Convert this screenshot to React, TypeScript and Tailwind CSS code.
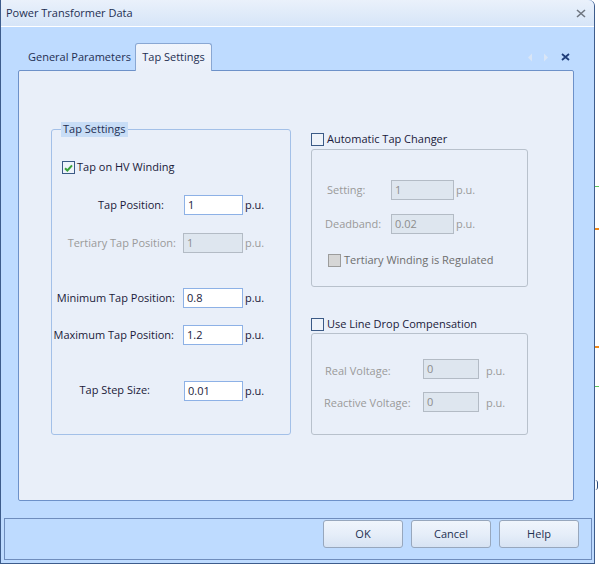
import { ReactNode } from "react";

const font = { fontFamily: '"Open Sans", "Noto Sans", sans-serif' };

function Check({ checked, disabled }: { checked?: boolean; disabled?: boolean }) {
  return (
    <span
      className={`flex items-center justify-center w-[13px] h-[13px] border ${
        disabled
          ? "border-[#9c9c9c] bg-[#d6d6d6]"
          : "border-[#3b5a86] bg-[#eef3fa]"
      }`}
    >
      {checked && (
        <svg width="9" height="8" viewBox="0 0 9 8">
          <path d="M1 4.2 L3.4 6.5 L8 1.3" stroke="#3aa23a" strokeWidth="2" fill="none" />
        </svg>
      )}
    </span>
  );
}

function Field({
  value,
  disabled,
  width,
}: {
  value: string;
  disabled?: boolean;
  width: string;
}) {
  return (
    <div
      className={`${width} h-[20px] flex items-center pl-[3px] border ${
        disabled
          ? "bg-[#dee6ef] border-[#b3bbc5] text-[#8d8d8d]"
          : "bg-white border-[#8db1e6] text-[#1a1a3a]"
      }`}
    >
      {value}
    </div>
  );
}

function Button({ children }: { children: ReactNode }) {
  return (
    <div className="w-[80px] h-[28px] flex items-center justify-center rounded-[3px] border border-[#97a7bd] bg-gradient-to-b from-[#f0f5fc] via-[#e6eef9] to-[#d7e3f3] text-[#1e3050]">
      {children}
    </div>
  );
}

export default function App() {
  return (
    <div className="flex w-[599px] h-[564px] bg-white text-[11px] text-[#1a1a3a] whitespace-nowrap" style={font}>
      <div className="flex flex-col w-[595px] h-[564px] border-x border-b border-[#3d5c8c] rounded-tr-[6px] bg-[#bedbff]">
        {/* title bar */}
        <div className="h-[27px] flex items-center justify-between pl-[5px] pr-[8px] border-b border-white bg-gradient-to-b from-[#eaf1fb] to-[#d6e5f8] rounded-tr-[6px]">
          <span className="text-[#1e2f52]">Power Transformer Data</span>
          <svg width="10" height="9" viewBox="0 0 10 9">
            <path d="M1 1 L9 8 M9 1 L1 8" stroke="#6f7680" strokeWidth="1.6" />
          </svg>
        </div>

        <div className="flex flex-col pt-[16px]">
          {/* tabs */}
          <div className="flex items-end h-[28px] -mb-px ml-[17px] w-[556px] relative z-10">
            <div className="w-[117px] h-[28px] pl-[10px] flex items-center text-[#1e2f52]">
              General Parameters
            </div>
            <div className="w-[77px] h-[28px] flex items-center justify-center text-[#1e2f52] border-x border-t border-[#89a7d3] rounded-t-[3px] bg-gradient-to-b from-[#f1f5fc] to-[#e9eff9]">
              Tap Settings
            </div>
            <div className="ml-auto flex items-center gap-[10px] pr-[4px] h-[28px]">
              <svg width="6" height="9" viewBox="0 0 6 9">
                <path d="M5 0.5 L1 4.5 L5 8.5 Z" fill="#d9e5f6" />
              </svg>
              <svg width="6" height="9" viewBox="0 0 6 9">
                <path d="M1 0.5 L5 4.5 L1 8.5 Z" fill="#d9e5f6" />
              </svg>
              <svg width="9" height="8" viewBox="0 0 9 8" className="ml-[2px]">
                <path d="M1 1 L8 7 M8 1 L1 7" stroke="#1f3d7a" strokeWidth="1.8" />
              </svg>
            </div>
          </div>

          {/* panel */}
          <div className="ml-[17px] w-[556px] h-[431px] border border-[#6d91c9] rounded-[2px] bg-[#e9eff9] flex items-start pl-[32px] pt-[58px]">
            {/* left group */}
            <div className="relative w-[240px] h-[306px] border border-[#a3c0e8] rounded-[3px] flex flex-col pt-[31px]">
              <span className="absolute left-[9px] top-[-8px] h-[15px] px-[2px] flex items-center bg-[#c8ddf6] text-[#1e2f52]">
                Tap Settings
              </span>
              <div className="flex items-center gap-[2px] pl-[10px] h-[13px]">
                <Check checked />
                <span>Tap on HV Winding</span>
              </div>

              <div className="flex items-center h-[20px] mt-[21px]">
                <div className="w-[124px] flex justify-end pr-[12px]">Tap Position:</div>
                <div className="ml-[8px]"><Field value="1" width="w-[59px]" /></div>
                <span className="ml-[2px]">p.u.</span>
              </div>
              <div className="flex items-center h-[20px] mt-[18px] text-[#9a9a9a]">
                <div className="w-[124px] flex justify-end">Tertiary Tap Position:</div>
                <div className="ml-[7px]"><Field value="1" width="w-[60px]" disabled /></div>
                <span className="ml-[2px]">p.u.</span>
              </div>
              <div className="flex items-center h-[20px] mt-[35px]">
                <div className="w-[124px] flex justify-end pr-[1px]">Minimum Tap Position:</div>
                <div className="ml-[7px]"><Field value="0.8" width="w-[60px]" /></div>
                <span className="ml-[2px]">p.u.</span>
              </div>
              <div className="flex items-center h-[20px] mt-[17px]">
                <div className="w-[124px] flex justify-end pr-[2px]">Maximum Tap Position:</div>
                <div className="ml-[7px]"><Field value="1.2" width="w-[60px]" /></div>
                <span className="ml-[2px]">p.u.</span>
              </div>
              <div className="flex items-center h-[20px] mt-[36px]">
                <div className="w-[124px] flex justify-end pr-[26px] -mt-[2px]">Tap Step Size:</div>
                <div className="ml-[8px]"><Field value="0.01" width="w-[59px]" /></div>
                <span className="ml-[2px]">p.u.</span>
              </div>
            </div>

            {/* right column */}
            <div className="ml-[20px] w-[217px] flex flex-col mt-[4px]">
              <div className="flex items-center gap-[3px] h-[13px]">
                <Check />
                <span>Automatic Tap Changer</span>
              </div>
              <div className="mt-[3px] h-[138px] border border-[#b8c1cc] rounded-[3px] flex flex-col pt-[30px] text-[#9a9a9a]">
                <div className="flex items-center h-[20px]">
                  <div className="w-[79px] pl-[15px]">Setting:</div>
                  <Field value="1" width="w-[63px]" disabled />
                  <span className="ml-[2px]">p.u.</span>
                </div>
                <div className="flex items-center h-[20px] mt-[14px]">
                  <div className="w-[79px] pl-[13px]">Deadband:</div>
                  <Field value="0.02" width="w-[63px]" disabled />
                  <span className="ml-[2px]">p.u.</span>
                </div>
                <div className="flex items-center gap-[3px] pl-[16px] h-[13px] mt-[20px]">
                  <Check disabled />
                  <span className="text-[#6e6e6e]">Tertiary Winding is Regulated</span>
                </div>
              </div>

              <div className="flex items-center gap-[3px] h-[13px] mt-[31px]">
                <Check />
                <span>Use Line Drop Compensation</span>
              </div>
              <div className="mt-[2px] h-[102px] border border-[#b8c1cc] rounded-[3px] flex flex-col pt-[25px] text-[#9a9a9a]">
                <div className="flex items-center h-[20px]">
                  <div className="w-[111px] pl-[13px] pt-[4px]">Real Voltage:</div>
                  <Field value="0" width="w-[56px]" disabled />
                  <span className="ml-[7px] pt-[4px]">p.u.</span>
                </div>
                <div className="flex items-center h-[20px] mt-[13px]">
                  <div className="w-[111px] pl-[12px] pt-[2px]">Reactive Voltage:</div>
                  <Field value="0" width="w-[56px]" disabled />
                  <span className="ml-[7px] pt-[2px]">p.u.</span>
                </div>
              </div>
            </div>
          </div>

          {/* bottom bar */}
          <div className="mt-[17px] ml-[3px] w-[588px] h-[42px] border border-[#6f8dbd] flex justify-end gap-[8px] pr-[12px] pt-[1px]">
            <Button>OK</Button>
            <Button>Cancel</Button>
            <Button>Help</Button>
          </div>
        </div>
      </div>

      {/* marks outside the dialog */}
      <div className="flex flex-col w-[4px]">
        <span className="mt-[186px] h-[1px] w-[4px] bg-[#5ec85e]" />
        <span className="mt-[41px] h-[2px] w-[4px] bg-[#f08a1c]" />
        <span className="mt-[116px] h-[2px] w-[4px] bg-[#f08a1c]" />
        <span className="mt-[38px] h-[1px] w-[4px] bg-[#5ec85e]" />
        <span className="mt-[93px] h-[10px] w-[3px] border-r border-[#2a4a7a] rounded-r-full" />
      </div>
    </div>
  );
}
